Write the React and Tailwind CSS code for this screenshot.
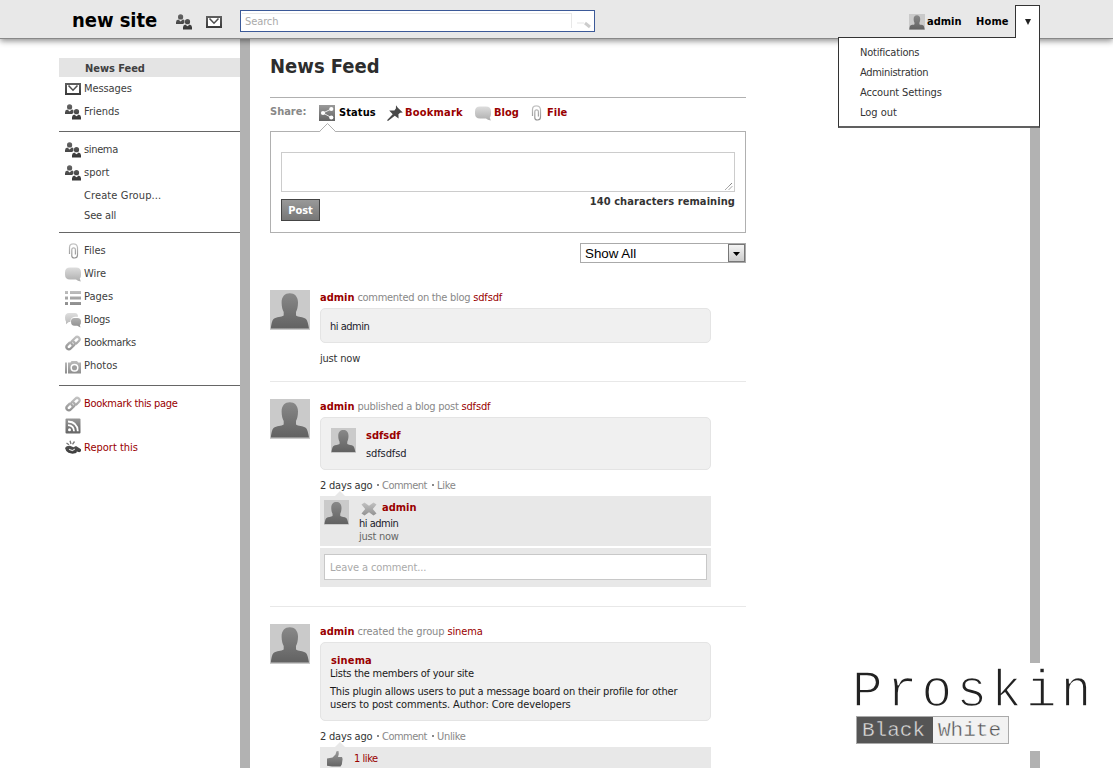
import React from "react";

function Svg({ className = "", children, size = 16 }) {
  return (
    <svg width={size} height={size} viewBox="0 0 16 16" className={"block shrink-0 " + className}>
      {children}
    </svg>
  );
}

function Defs() {
  return (
    <svg width="0" height="0" className="absolute">
      <defs>
        <linearGradient id="dark" x1="0" y1="0" x2="0" y2="16" gradientUnits="userSpaceOnUse">
          <stop offset="0" stopColor="#666" />
          <stop offset="1" stopColor="#333" />
        </linearGradient>
        <linearGradient id="light" x1="0" y1="0" x2="0" y2="16" gradientUnits="userSpaceOnUse">
          <stop offset="0" stopColor="#e2e2e2" />
          <stop offset="1" stopColor="#acacac" />
        </linearGradient>
        <linearGradient id="mid" x1="0" y1="0" x2="0" y2="16" gradientUnits="userSpaceOnUse">
          <stop offset="0" stopColor="#c8c8c8" />
          <stop offset="1" stopColor="#8c8c8c" />
        </linearGradient>
        <linearGradient id="box" x1="0" y1="0" x2="0" y2="16" gradientUnits="userSpaceOnUse">
          <stop offset="0" stopColor="#9a9a9a" />
          <stop offset="1" stopColor="#636363" />
        </linearGradient>
        <linearGradient id="person" x1="0" y1="0" x2="0" y2="40" gradientUnits="userSpaceOnUse">
          <stop offset="0" stopColor="#8c8c8c" />
          <stop offset="1" stopColor="#606060" />
        </linearGradient>
      </defs>
    </svg>
  );
}

const Users = () => (
  <Svg>
    <g fill="url(#dark)">
      <circle cx="4.6" cy="2.9" r="2.6" />
      <path d="M0 10V8.200Q0 5.900 2.500 5.500L4.600 7.400 6.700 5.500Q8 5.700 8.500 6.600L8.400 9 7 10Z" />
      <circle cx="11.500" cy="7.700" r="2.600" />
      <path d="M7 15.500V13.200Q7 10.800 9.300 10.400L11.500 12.300 13.700 10.400Q16 10.800 16 13.200V15.500Z" />
    </g>
  </Svg>
);

const Mail = () => (
  <Svg>
    <rect x="1" y="3" width="14" height="10" fill="#fff" stroke="url(#dark)" strokeWidth="2" />
    <path d="M3.500 4.500 8 9.200 12.500 4.500" fill="none" stroke="#505050" strokeWidth="1.600" />
  </Svg>
);

const Clip = () => (
  <Svg>
    <path
      d="M4.500 11V4.500Q4.500 .8 8.300 .8T12.500 4.500V12Q12.500 15 9.500 15T6.800 12V6.800Q6.800 4.800 8.600 4.800T10.400 6.800V11.500"
      fill="none"
      stroke="url(#mid)"
      strokeWidth="1.200"
    />
  </Svg>
);

const Bubble = () => (
  <Svg>
    <path
      d="M5 1.500H11Q16 1.500 16 6.500V9Q16 11 14.800 12.500L15.800 15.500Q12.500 15 11 13.500H5Q0 13.500 0 8.500V6.500Q0 1.500 5 1.500Z"
      fill="url(#light)"
    />
  </Svg>
);

const Bubbles = () => (
  <Svg>
    <path d="M4 1H10Q13 1 13 4.800H10Q5.500 5.300 5.300 10H3.800L1 12.300V9.500Q0 8 0 5.500 0 1 4 1Z" fill="url(#light)" />
    <path d="M9.500 6H12.500Q16 6.200 16 9.500T14.800 13L15.500 15.400 12.300 13.800H9.500Q6 13.500 6 9.700T9.500 6Z" fill="url(#mid)" />
  </Svg>
);

const List = () => (
  <Svg>
    <g fill="url(#mid)">
      <path d="M0 2H3V5H0ZM5 2H16V5H5ZM0 7.500H3V10.500H0ZM5 7.500H16V10.500H5ZM0 13H3V16H0ZM5 13H16V16H5Z" />
    </g>
  </Svg>
);

const LinkIcon = () => (
  <Svg>
    <g fill="none" stroke="url(#mid)" strokeWidth="2.300">
      <path d="M7.200 9.600Q5.300 7.800 7 6L10.300 2.700Q12 1 13.800 2.500 15.600 4.200 13.800 6L11.300 8.500" strokeLinecap="round" />
      <path d="M8.800 6.600Q10.700 8.300 9 10.200L5.700 13.500Q4 15.200 2.200 13.600 .5 11.900 2.200 10.100L4.700 7.600" strokeLinecap="round" />
    </g>
  </Svg>
);

const Camera = () => (
  <Svg>
    <path d="M0 4.500H2V15.500H0ZM3 4.500H5.500L6.500 3H12L13.200 4.500H16V15.500H3Z" fill="url(#mid)" />
    <circle cx="9.500" cy="9.700" r="3.300" fill="#a0a0a0" stroke="#fff" strokeWidth="1.500" />
  </Svg>
);

const Rss = () => (
  <Svg>
    <rect x=".500" y=".500" width="15" height="15" rx="1" fill="url(#box)" />
    <circle cx="4.500" cy="11.800" r="1.500" fill="#fff" />
    <path d="M3 7.200Q8.800 7.500 9 13.300M3 3.500Q12.500 4 12.800 13.300" fill="none" stroke="#fff" strokeWidth="1.800" />
  </Svg>
);

const Report = () => (
  <Svg>
    <path d="M0 8Q1.500 5.500 5 5.800L8.500 7.300 11 6 16 9.200V11.300L14.300 12.300 11.800 11.500 11.300 13 7.500 13.800 3.500 12.800Q.500 11 0 8Z" fill="url(#dark)" />
    <path d="M4 9.300 7.300 10.600 9.800 9" fill="none" stroke="#ddd" strokeWidth="1.100" />
    <path d="M1.500 3 4 4.700M5 .8 6 4M9.500 1.500 7.500 4.300" stroke="#777" strokeWidth="1.300" />
  </Svg>
);

const Share = () => (
  <Svg>
    <path d="M0 0H16V16H0Z" fill="url(#box)" />
    <path d="M12.300 4 4 8 12.300 12.500" fill="none" stroke="#e8e8e8" strokeWidth="1" />
    <g fill="#fff">
      <circle cx="4" cy="8" r="2.100" />
      <circle cx="12.300" cy="4" r="2.100" />
      <circle cx="12.300" cy="12.500" r="2.100" />
    </g>
  </Svg>
);

const Pin = () => (
  <Svg>
    <path d="M9 .2 10.800 2.800 15.800 7.400 13.200 7.800 11.400 9.200 11.600 13.500 7.800 10.800 1 16 0 15.300 5.700 9.300 2.200 5.500 7.400 5.400 8.900 3.500Z" fill="#484848" />
  </Svg>
);

const Cross = () => (
  <Svg>
    <path d="M.500 3.500 3.500 1.500 8 4.700 12.500 1.500 15.500 3.500 11.800 8 15.500 12.500 12.500 14.500 8 11.300 3.500 14.500 .500 12.500 4.200 8Z" fill="url(#mid)" />
  </Svg>
);

const Thumb = () => (
  <Svg>
    <path d="M0 7.500 5.500 6.500 8.500 3.500 9.500 .3 11.500 0 11.800 3 11 6H15L15.600 8 14.800 13.500 13.500 15.500H5L0 14.800Z" fill="url(#box)" />
  </Svg>
);

function Avatar({ size }) {
  return (
    <svg width={size} height={size} viewBox="0 0 40 40" className="block shrink-0 bg-[#cacaca]">
      <path
        d="M19.800 3.300C24.500 3.300 28 6.500 28 12.500 28 17 27 20 26 22V25.500C28 27.300 33 26.500 36 29 37.500 30.500 38.300 34.500 39 38.500H.800C1.300 34.500 2 30.500 3.500 29 6.500 26.500 11.500 27.300 13.700 25.500V22C12.600 20 11.600 17 11.600 12.500 11.600 6.500 15 3.300 19.800 3.300Z"
        fill="url(#person)"
      />
    </svg>
  );
}

function Item({ icon, children, className = "" }) {
  return (
    <div className={"flex h-[23px] pl-[6px] " + className}>
      <div className="w-[19px] pt-[4px]">{icon}</div>
      <span className="leading-[23px]">{children}</span>
    </div>
  );
}

function Sidebar() {
  return (
    <nav className="w-[181px] shrink-0 pt-[19px] text-[#404040]">
      <div className="h-[19px] bg-[#e4e4e4] pl-[26px] text-[11px] leading-[21px] font-bold tracking-[-0.05px]">News Feed</div>
      <Item icon={<Mail />} className="tracking-[-0.1px]">Messages</Item>
      <Item icon={<Users />}>Friends</Item>
      <div className="mt-[8px] border-t border-[#666] pt-[6px]">
        <Item icon={<Users />} className="tracking-[-0.350px]">sinema</Item>
        <Item icon={<Users />}>sport</Item>
        <div className="mt-px h-[20px] pl-[25px] leading-[21px] tracking-[0.12px]">Create Group...</div>
        <div className="h-[20px] pl-[25px] leading-[21px] tracking-[-0.150px]">See all</div>
      </div>
      <div className="mt-[7px] border-t border-[#666] pt-[6px]">
        <Item icon={<Clip />}>Files</Item>
        <Item icon={<Bubble />}>Wire</Item>
        <Item icon={<List />}>Pages</Item>
        <Item icon={<Bubbles />} className="tracking-[-0.2px]">Blogs</Item>
        <Item icon={<LinkIcon />} className="tracking-[-0.4px]">Bookmarks</Item>
        <Item icon={<Camera />}>Photos</Item>
      </div>
      <div className="mt-[8px] border-t border-[#666] pt-[6px] text-[#900]">
        <Item icon={<LinkIcon />} className="tracking-[-0.320px]">Bookmark this page</Item>
        <div className="h-[21px] pt-[3px] pl-[6px]"><Rss /></div>
        <Item icon={<Report />}>Report this</Item>
      </div>
    </nav>
  );
}

function Header() {
  return (
    <header className="relative z-10 flex h-[39px] shrink-0 border-b border-[#888] bg-[#e8e8e8] shadow-[0_2px_6px_rgba(0,0,0,0.45)]">
      <div className="w-[176px] pl-[72px] text-[20px] leading-[40px] font-bold tracking-[-0.05px] whitespace-nowrap text-black">new site</div>
      <div className="pt-[14px]"><Users /></div>
      <div className="ml-[14px] pt-[14px]"><Mail /></div>
      <div className="mt-[10px] ml-[18px] flex h-[22px] w-[355px] border border-[#3b5998] bg-white px-px pt-[2px]">
        <div className="h-[15px] w-[331px] border-t border-r border-[#e8e8e8] pl-[3px] leading-[15px] tracking-[-0.1px] text-[#aaa]">Search</div>
        <svg width="18" height="16" viewBox="0 0 18 16" className="ml-[3px]">
          <path d="M2 10H9" stroke="#eee" strokeWidth="1.500" />
          <path d="M10 10 15 14" stroke="#ccc" strokeWidth="3" />
        </svg>
      </div>
      <div className="ml-[314px] flex w-[67px] pt-[14px]">
        <Avatar size={16} />
        <b className="ml-[2px] text-[11px] leading-[15px] text-black">admin</b>
      </div>
      <b className="w-[39px] pt-[14px] text-[11px] leading-[15px] tracking-[0.150px] text-black">Home</b>
      <div className="relative z-20 mt-[5px] h-[33px] w-[25px] border-x border-t border-[#333] bg-white">
        <svg width="8" height="8" viewBox="0 0 8 8" className="mt-[12px] ml-[8px]">
          <path d="M1 1H7L4 7Z" fill="#222" />
        </svg>
      </div>
      <div className="absolute top-[37px] left-[838px] h-[91px] w-[202px] border border-b-2 border-[#333] border-b-[#606060] bg-white pt-[4px] pl-[21px] leading-[21px] text-[#333]">
        <div className="h-[20px] tracking-[-0.2px]">Notifications</div>
        <div className="h-[20px] tracking-[-0.3px]">Administration</div>
        <div className="h-[20px] tracking-[-0.120px]">Account Settings</div>
        <div className="h-[20px]">Log out</div>
      </div>
    </header>
  );
}

function Composer() {
  return (
    <>
      <div className="flex h-[34px] border-t border-[#b0b0b0] pt-[7px] text-[11px] leading-[15px] font-bold text-[#900]">
        <span className="w-[49px] leading-[13px] text-[#888]">Share:</span>
        <Share />
        <span className="ml-[4px] w-[48px] tracking-[0.1px] text-black">Status</span>
        <Pin />
        <span className="ml-[2px] w-[70px] tracking-[0.2px]">Bookmark</span>
        <Bubble />
        <span className="ml-[3px] w-[34px]">Blog</span>
        <Clip />
        <span className="ml-[3px]">File</span>
      </div>
      <div className="relative h-[102px] border border-[#b0b0b0] px-[10px] pt-[20px]">
        <svg width="18" height="10" viewBox="0 0 18 10" className="absolute top-[-9px] left-[48px]">
          <path d="M.500 9 8.500 1 16.500 9V10H.500Z" fill="#fff" />
          <path d="M.500 8.500 8.500 .500 16.500 8.500" fill="none" stroke="#b0b0b0" />
        </svg>
        <div className="flex h-[40px] items-end justify-end border border-[#ccc] p-px">
          <svg width="8" height="8" viewBox="0 0 8 8">
            <path d="M.500 7.500 7 1M4 7.500 7 4.500" stroke="#555" strokeDasharray="1 .6" />
          </svg>
        </div>
        <div className="flex justify-between text-[11px] font-bold">
          <div className="mt-[7px] h-[22px] w-[39px] border border-[#444] bg-linear-to-b from-[#999] to-[#777] text-center leading-[21px] text-white">Post</div>
          <span className="pt-[2px] leading-[15px] tracking-[0.08px] text-[#333]">140 characters remaining</span>
        </div>
      </div>
      <div className="mt-[10px] ml-auto flex h-[20px] w-[166px] justify-between border border-[#aaa] bg-white pl-[4px] font-[Liberation_Sans] text-[13.330px] leading-[19px] text-black">
        Show All
        <span className="h-[18px] w-[17px] border border-[#777] bg-linear-to-b from-[#f4f4f4] to-[#ccc]">
          <svg width="15" height="16" viewBox="0 0 15 16"><path d="M4 7H11L7.500 11Z" fill="#000" /></svg>
        </span>
      </div>
    </>
  );
}

function Entry({ verb, target, children, verbClass, className = "" }) {
  return (
    <article className={"flex " + className}>
      <Avatar size={40} />
      <div className="ml-[10px] w-[391px]">
        <div className="h-[18px] leading-[15px] text-[#888]">
          <b className="text-[11px] text-[#900]">admin</b>
          <span className={verbClass}> {verb} </span>
          <span className="tracking-[-0.150px] text-[#900]">{target}</span>
        </div>
        {children}
      </div>
    </article>
  );
}

function Meta({ action }) {
  return (
    <div className="relative mt-[8px] flex h-[18px] leading-[15px] text-[#888]">
      <span className="w-[57px] tracking-[-0.2px] text-[#333]">2 days ago</span>
      <span className="mt-[6px] h-[2px] w-[2px] bg-[#888]" />
      <span className="ml-[3px] w-[50px] tracking-[-0.5px]">Comment</span>
      <span className="mt-[6px] h-[2px] w-[2px] bg-[#888]" />
      <span className="ml-[3px] tracking-[-0.3px]">{action}</span>
      <svg width="10" height="5" viewBox="0 0 10 5" className="absolute bottom-0 left-[15px]">
        <path d="M0 5 5 0 10 5Z" fill="#e8e8e8" />
      </svg>
    </div>
  );
}

function Feed() {
  return (
    <>
      <Entry verb="commented on the blog" target="sdfsdf" verbClass="tracking-[-0.280px]" className="mt-[27px] h-[92px] border-b border-[#e8e8e8]">
        <div className="h-[35px] rounded-[5px] border border-[#e4e4e4] bg-[#f0f0f0] pl-[9px] leading-[35px] tracking-[-0.5px] text-[#1a1a2a]">hi admin</div>
        <div className="mt-[8px] leading-[15px] tracking-[-0.2px] text-[#333]">just now</div>
      </Entry>
      <Entry verb="published a blog post" target="sdfsdf" verbClass="tracking-[-0.250px]" className="mt-[17px] h-[208px] border-b border-[#e8e8e8]">
        <div className="flex h-[53px] rounded-[5px] border border-[#e4e4e4] bg-[#f0f0f0] pt-[10px] pl-[10px] text-[#1a1a2a]">
          <Avatar size={25} />
          <div className="ml-[10px]">
            <b className="block h-[18px] text-[11px] leading-[15px] text-[#900]">sdfsdf</b>
            <div className="leading-[15px] tracking-[-0.1px]">sdfsdfsd</div>
          </div>
        </div>
        <Meta action="Like" />
        <div className="flex h-[50px] bg-[#e8e8e8] pt-[4px] pl-[4px]">
          <Avatar size={25} />
          <div className="ml-[10px] leading-[13px] tracking-[-0.250px] text-[#666]">
            <div className="flex h-[17px]">
              <span className="mt-px ml-[2px]"><Cross /></span>
              <b className="ml-[5px] text-[11px] leading-[15px] tracking-normal text-[#900]">admin</b>
            </div>
            <div className="tracking-[-0.5px] text-[#1a1a2a]">hi admin</div>
            <div>just now</div>
          </div>
        </div>
        <div className="mt-[2px] h-[39px] bg-[#e8e8e8] px-[4px] pt-[6px]">
          <div className="h-[26px] border border-[#c8c8c8] bg-white pl-[5px] leading-[25px] tracking-[-0.1px] text-[#aaa]">Leave a comment...</div>
        </div>
      </Entry>
      <Entry verb="created the group" target="sinema" verbClass="tracking-[-0.120px]" className="mt-[17px]">
        <div className="h-[79px] rounded-[5px] border border-[#e4e4e4] bg-[#f0f0f0] pt-[11px] pl-[9px] leading-[13px] tracking-[-0.190px] whitespace-nowrap text-[#1a1a1a]">
          <b className="block pl-px text-[11px] tracking-[0.150px] text-[#900]">sinema</b>
          <div className="h-[18px] tracking-[-0.240px]">Lists the members of your site</div>
          <div>This plugin allows users to put a message board on their profile for other</div>
          <div className="tracking-[-0.120px]">users to post comments. Author: Core developers</div>
        </div>
        <Meta action="Unlike" />
        <div className="flex h-[40px] bg-[#e8e8e8] pt-[4px] pl-[7px] text-[#900]">
          <Thumb />
          <span className="ml-[11px] leading-[15px] tracking-[-0.450px]">1 like</span>
        </div>
      </Entry>
    </>
  );
}

export default function App() {
  return (
    <div className="relative flex h-[768px] w-[1113px] flex-col overflow-hidden bg-white font-['DejaVu_Sans_Condensed','DejaVu_Sans',sans-serif] text-[11px] [font-stretch:75%]">
      <Defs />
      <Header />
      <div className="flex min-h-0 flex-1 pl-[59px]">
        <Sidebar />
        <main className="w-[800px] border-x-10 border-[#b2b2b2] pl-[20px]">
          <div className="w-[476px]">
            <h1 className="h-[58px] pt-[14px] text-[20px] leading-[26px] font-bold text-[#2d2d2d]">News Feed</h1>
            <Composer />
            <Feed />
          </div>
        </main>
      </div>
      <div className="absolute top-[663px] left-[840px] h-[88px] w-[273px] bg-white pl-[12px] font-[Liberation_Mono]">
        <div className="h-[53px] pt-[3px] text-[51px] leading-[54px] tracking-[4.200px] text-[#222] [-webkit-text-stroke:1.500px_white]">Proskin</div>
        <div className="ml-[4px] flex h-[28px] w-[153px] border border-[#aaa] text-[21px] leading-[28px]">
          <span className="w-[76px] bg-[#555] pl-[5px] text-[#ddd] [-webkit-text-stroke:0.400px_#555]">Black</span>
          <span className="flex-1 bg-[#f2f2f2] pl-[5px] text-[#555] [-webkit-text-stroke:0.400px_#f2f2f2]">White</span>
        </div>
      </div>
    </div>
  );
}
